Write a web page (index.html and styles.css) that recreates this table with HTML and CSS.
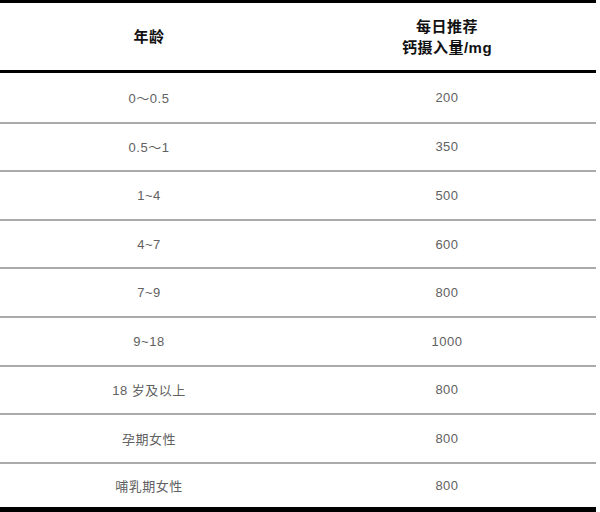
FILE: index.html
```html
<!DOCTYPE html>
<html lang="zh-CN">
<head>
<meta charset="utf-8">
<title>钙摄入量</title>
<link rel="stylesheet" href="styles.css">
</head>
<body>
<table class="calcium">
  <thead>
    <tr>
      <th>年龄</th>
      <th>每日推荐<br>钙摄入量/mg</th>
    </tr>
  </thead>
  <tbody>
    <tr class="first"><td>0～0.5</td><td>200</td></tr>
    <tr><td>0.5～1</td><td>350</td></tr>
    <tr><td>1~4</td><td>500</td></tr>
    <tr><td>4~7</td><td>600</td></tr>
    <tr><td>7~9</td><td>800</td></tr>
    <tr><td>9~18</td><td>1000</td></tr>
    <tr><td>18 岁及以上</td><td>800</td></tr>
    <tr><td>孕期女性</td><td>800</td></tr>
    <tr class="last"><td>哺乳期女性</td><td>800</td></tr>
  </tbody>
</table>
</body>
</html>
```

FILE: styles.css
```css
html, body {
  margin: 0;
  padding: 0;
  background: #fff;
}

body {
  font-family: "Liberation Sans", "Noto Sans CJK SC", sans-serif;
}

.calcium {
  width: 596px;
  border-collapse: collapse;
  border-top: 3px solid #000;
  border-bottom: 5px solid #000;
  table-layout: fixed;
}

.calcium th {
  width: 50%;
  height: 67px;
  padding: 0;
  font-size: 15px;
  line-height: 21px;
  letter-spacing: 0.5px;
  font-weight: bold;
  color: #111;
  text-align: center;
  vertical-align: middle;
  border-bottom: 3px solid #000;
}

.calcium td {
  height: 46.6px;
  padding: 0;
  font-size: 13px;
  letter-spacing: 0.5px;
  color: #616161;
  text-align: center;
  vertical-align: middle;
  border-bottom: 2px solid #ababab;
}

.calcium tr.first td {
  height: 48.6px;
}

.calcium tr.last td {
  height: 43px;
  border-bottom: none;
}
```
